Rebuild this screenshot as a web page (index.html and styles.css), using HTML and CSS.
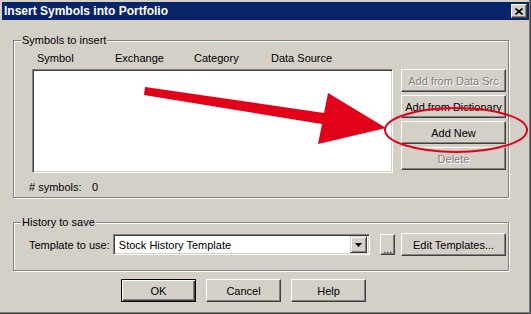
FILE: index.html
```html
<!DOCTYPE html>
<html lang="en">
<head>
  <meta charset="UTF-8">
  <title>Insert Symbols into Portfolio</title>
  <link rel="stylesheet" href="styles.css">
</head>
<body>
  <div class="window">
    <div class="titlebar">
      <span class="title">Insert Symbols into Portfolio</span>
      <button class="close" aria-label="Close">
        <svg width="8" height="7" viewBox="0 0 8 7"><path d="M0.5 0.5L7.5 6.5M7.5 0.5L0.5 6.5" stroke="#000" stroke-width="1.6" fill="none"/></svg>
      </button>
    </div>

    <div class="body">
      <div class="group group-symbols">
        <span class="legend">Symbols to insert</span>
        <div class="cols">
          <span class="col col-symbol">Symbol</span>
          <span class="col col-exchange">Exchange</span>
          <span class="col col-category">Category</span>
          <span class="col">Data Source</span>
        </div>
        <div class="list-row">
          <div class="listbox"></div>
          <div class="side-buttons">
            <button class="btn disabled">Add from Data Src</button>
            <button class="btn">Add from Dictionary</button>
            <button class="btn">Add New</button>
            <button class="btn disabled">Delete</button>
          </div>
        </div>
        <div class="count">
          <span class="count-label"># symbols:</span>
          <span>0</span>
        </div>
      </div>

      <div class="group group-history">
        <span class="legend">History to save</span>
        <div class="template-row">
          <span class="template-label">Template to use:</span>
          <div class="combo">
            <span class="combo-value">Stock History Template</span>
            <span class="combo-arrow"><svg width="7" height="4" viewBox="0 0 7 4"><path d="M0 0H7L3.5 4Z" fill="#000"/></svg></span>
          </div>
          <button class="btn btn-dots">...</button>
          <button class="btn btn-edit">Edit Templates...</button>
        </div>
      </div>

      <div class="actions">
        <button class="btn btn-action btn-default">OK</button>
        <button class="btn btn-action">Cancel</button>
        <button class="btn btn-action">Help</button>
      </div>
    </div>

    <svg class="markup" width="531" height="314" viewBox="0 0 531 314">
      <polygon points="145,87 324,113 328,93 386,128 318,144 322,124 144,95" fill="#e3001b"/>
      <ellipse cx="456" cy="130" rx="71" ry="22" fill="none" stroke="#e3001b" stroke-width="2"/>
    </svg>
  </div>
</body>
</html>
```

FILE: styles.css
```css
body {
  margin: 0;
  font-family: "Liberation Sans", Arial, sans-serif;
  font-size: 11px;
  color: #000;
  background: #d4d0c8;
}
.window {
  position: relative;
  width: 531px;
  height: 314px;
  box-sizing: border-box;
  padding: 2px 1px 0 2px;
  background: #d4d0c8;
  border-right: 1px solid #404040;
  border-bottom: 1px solid #404040;
  box-shadow: inset -1px -1px 0 #808080;
  overflow: hidden;
}
.titlebar {
  height: 18px;
  background: #0a246a;
  display: flex;
  align-items: center;
  justify-content: space-between;
  padding: 0 2px 0 2px;
}
.title {
  color: #fff;
  font-weight: bold;
  font-size: 12px;
  line-height: 18px;
}
.close {
  width: 16px;
  height: 14px;
  padding: 0;
  display: flex;
  align-items: center;
  justify-content: center;
  background: #d4d0c8;
  border: 1px solid;
  border-color: #fff #404040 #404040 #fff;
  box-shadow: inset -1px -1px 0 #808080;
}

.body {
  padding-left: 11px;
}
.group {
  position: relative;
  box-sizing: border-box;
  width: 496px;
  border: 1px solid #808080;
  box-shadow: inset 1px 1px 0 #fff, 1px 1px 0 #fff;
}
.legend {
  position: absolute;
  left: 7px;
  top: -7px;
  padding: 0 1px;
  line-height: 13px;
  background: #d4d0c8;
}
.group-symbols {
  margin-top: 20px;
  height: 158px;
  padding: 11px 2px 3px 18px;
}
.cols {
  display: flex;
  line-height: 13px;
  padding-left: 5px;
}
.col-symbol { width: 78px; }
.col-exchange { width: 79px; }
.col-category { width: 77px; }

.list-row {
  display: flex;
  gap: 8px;
  margin-top: 4px;
}
.listbox {
  box-sizing: border-box;
  width: 362px;
  height: 104px;
  background: #fff;
  border: 1px solid;
  border-color: #808080 #fff #fff #808080;
  box-shadow: inset 1px 1px 0 #404040, inset -1px -1px 0 #d4d0c8;
}
.side-buttons {
  display: flex;
  flex-direction: column;
  gap: 3px;
}
.side-buttons .btn {
  width: 105px;
}
.count {
  display: flex;
  margin-top: 8px;
  margin-left: -3px;
  line-height: 13px;
}
.count-label {
  width: 63px;
}

.btn {
  box-sizing: border-box;
  height: 23px;
  padding: 0;
  font: inherit;
  color: #000;
  background: #d4d0c8;
  border: 1px solid;
  border-color: #fff #404040 #404040 #fff;
  box-shadow: inset -1px -1px 0 #808080;
}
.btn.disabled {
  color: #808080;
  text-shadow: 1px 1px 0 #fff;
}
.btn-default {
  border-color: #000;
  box-shadow: inset 1px 1px 0 #fff, inset -1px -1px 0 #404040, inset -2px -2px 0 #808080;
}

.group-history {
  margin-top: 24px;
  height: 49px;
  padding: 10px 2px 14px 15px;
}
.template-row {
  display: flex;
  align-items: center;
  height: 23px;
}
.template-label {
  width: 84px;
}
.combo {
  box-sizing: border-box;
  width: 258px;
  height: 21px;
  display: flex;
  align-items: center;
  justify-content: space-between;
  padding: 2px;
  background: #fff;
  border: 1px solid;
  border-color: #808080 #fff #fff #808080;
  box-shadow: inset 1px 1px 0 #404040, inset -1px -1px 0 #d4d0c8;
}
.combo-value {
  padding-left: 3px;
}
.combo-arrow {
  box-sizing: border-box;
  width: 17px;
  height: 17px;
  display: flex;
  align-items: center;
  justify-content: center;
  background: #d4d0c8;
  border: 1px solid;
  border-color: #d4d0c8 #404040 #404040 #d4d0c8;
  box-shadow: inset 1px 1px 0 #fff, inset -1px -1px 0 #808080;
}
.btn-dots {
  width: 15px;
  height: 21px;
  margin-left: 10px;
  line-height: 21px;
  padding-top: 4px;
}
.btn-edit {
  width: 105px;
  margin-left: 6px;
}

.actions {
  display: flex;
  gap: 10px;
  margin-top: 8px;
  padding-left: 108px;
}
.btn-action {
  width: 75px;
}

.markup {
  position: absolute;
  left: 0;
  top: 0;
  pointer-events: none;
}
```
